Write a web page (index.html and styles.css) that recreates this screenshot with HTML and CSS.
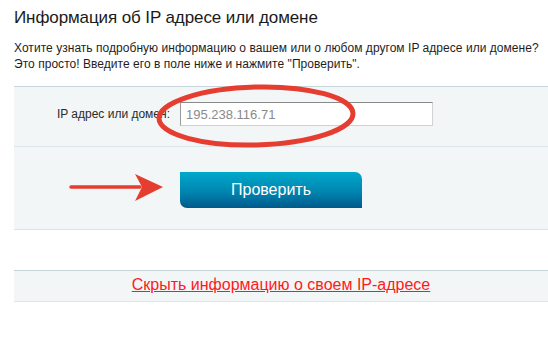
FILE: index.html
```html
<!DOCTYPE html>
<html lang="ru">
<head>
<meta charset="UTF-8" />
<meta name="viewport" content="width=device-width, initial-scale=1" />
<title>Информация об IP адресе или домене</title>
<link rel="stylesheet" href="styles.css">
</head>
<body>
<div class="page">

    <h1 class="title">Информация об IP адресе или домене</h1>

    <p class="intro">
        Хотите узнать подробную информацию о вашем или о любом другом IP адресе или домене?<br>
        Это просто! Введите его в поле ниже и нажмите "Проверить".
    </p>

    <!-- Форма проверки -->
    <form class="check-form" onsubmit="return false;">
        <div class="form-row">
            <label for="ip-input">IP адрес или домен:</label>
            <input type="text" id="ip-input" value="195.238.116.71" />
        </div>
        <div class="form-row form-row--button">
            <span></span>
            <button type="submit" class="check-btn">Проверить</button>
        </div>
    </form>

    <!-- Скрыть IP -->
    <div class="hide-ip">
        <a href="#">Скрыть информацию о своем IP-адресе</a>
    </div>

</div>

<!-- Пометки поверх скриншота -->
<svg class="marks" width="548" height="338" viewBox="0 0 548 338">
    <ellipse cx="256" cy="116" rx="97" ry="29" transform="rotate(-1.5 256 116)"
             fill="none" stroke="#e53d30" stroke-width="5" />
    <line x1="71" y1="187" x2="140" y2="187" stroke="#e53d30" stroke-width="3.5" stroke-linecap="round" />
    <polygon points="135,174 163,187 135,201 142,187" fill="#e53d30" />
</svg>
</body>
</html>
```

FILE: styles.css
```css
body {
    font-family: "Liberation Sans", Arial, sans-serif;
    background: #fff;
    margin: 0; padding: 0;
    color: #222;
    position: relative;
}
.page {
    padding-left: 14px;
}
h1.title {
    font-size: 17px;
    font-weight: normal;
    line-height: 22px;
    color: #1a1a1a;
    margin: 0;
    padding-top: 7px;
    letter-spacing: -0.1px;
}
.intro {
    font-size: 12px;
    line-height: 16px;
    margin: 11px 0 14px;
    color: #1e1e1e;
    letter-spacing: 0.04px;
    white-space: nowrap;
}
/* Форма */
.check-form {
    background: #f2f6f7;
    border-top: 1px solid #c6d6da;
    border-bottom: 1px solid #d8e4e7;
}
.form-row {
    display: grid;
    grid-template-columns: 156px 253px;
    column-gap: 10px;
    align-items: center;
    padding: 15px 0 20px;
    border-bottom: 1px solid #dbe6e9;
}
.form-row label {
    text-align: right;
    font-size: 12px;
    color: #2a2a2a;
}
.form-row input {
    height: 24px;
    box-sizing: border-box;
    border: 1px solid #d2d2d2;
    border-top-color: #8a8a8a;
    border-left-color: #9a9a9a;
    padding: 0 5px;
    font-family: inherit;
    font-size: 13px;
    color: #8a8a8a;
    background: #fff;
    outline: none;
}
.form-row--button {
    grid-template-columns: 156px 182px;
    padding: 25px 0 21px;
    border-bottom: none;
}
.check-btn {
    height: 36px;
    border: none;
    border-radius: 0 7px 0 7px;
    background: linear-gradient(#00a9cc, #0085b0 55%, #005a8b);
    color: #fff;
    font-family: inherit;
    font-size: 16px;
    cursor: pointer;
}
/* Скрыть IP */
.hide-ip {
    margin-top: 40px;
    background: #f2f6f7;
    border-top: 1px solid #c4d4d8;
    border-bottom: 1px solid #dce7ea;
    text-align: center;
    height: 30px;
    line-height: 28px;
}
.hide-ip a {
    color: #ff1a1a;
    font-size: 16px;
}
.marks {
    position: absolute;
    left: 0; top: 0;
    pointer-events: none;
}
```
